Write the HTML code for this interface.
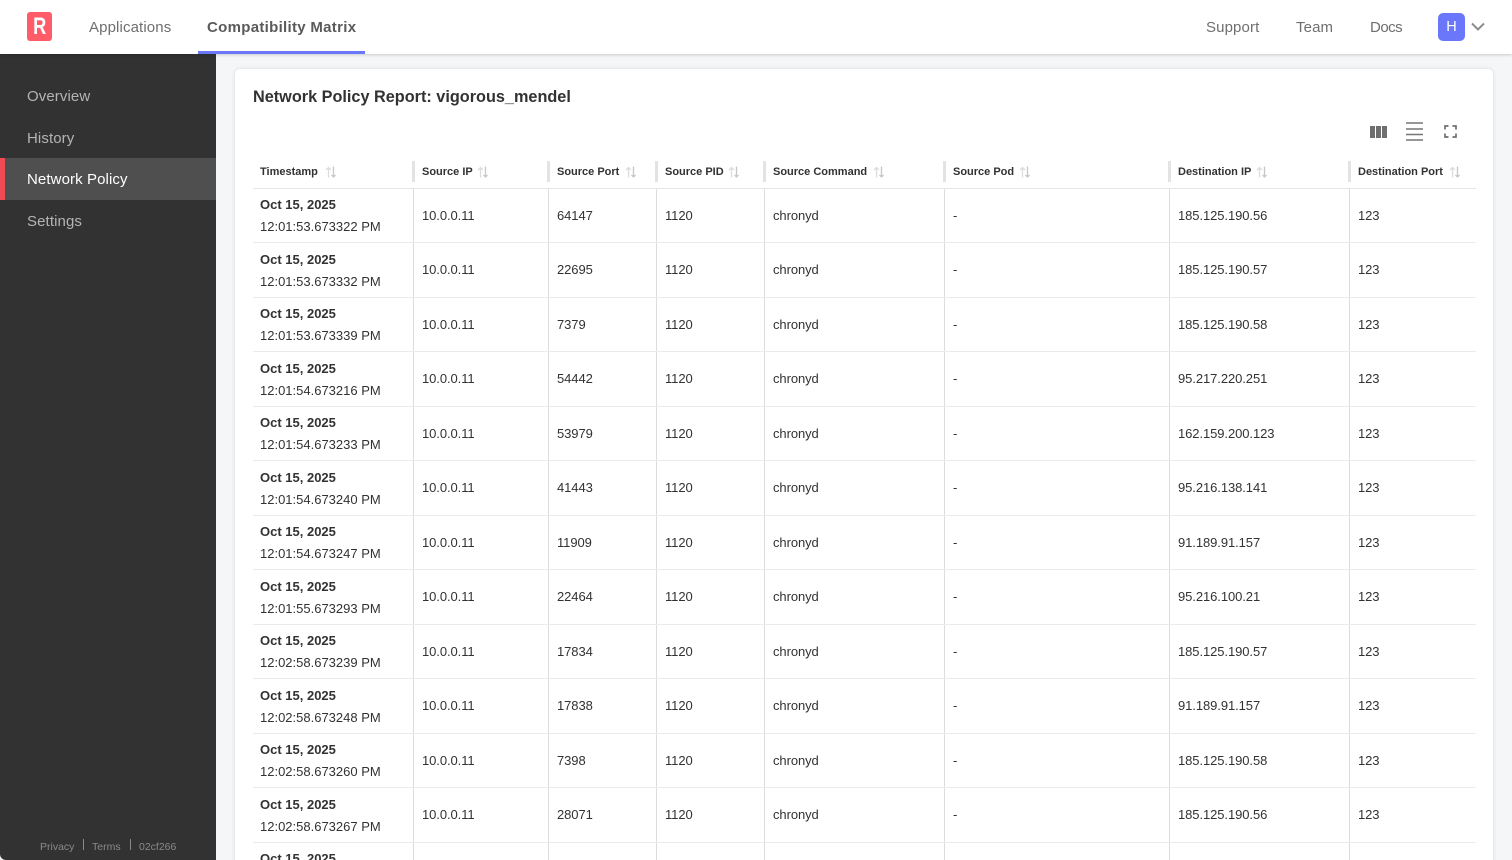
<!DOCTYPE html>
<html><head><meta charset="utf-8"><title>Network Policy</title>
<style>
*{box-sizing:border-box}
html,body{margin:0;padding:0;width:1512px;height:860px;overflow:hidden;background:#f5f6f8;font-family:"Liberation Sans",sans-serif;color:#323232}
#w{position:relative;width:1512px;height:860px;overflow:hidden;background:#f5f6f8}
.top{position:absolute;left:0;top:0;width:1512px;height:54px;background:#fff;box-shadow:0 1px 3px rgba(0,0,0,.18);z-index:5}
.logo{position:absolute;left:27px;top:12px;width:25px;height:29px;background:#ff5b69;border-radius:3px;color:#fff;font-weight:bold;font-size:24px;line-height:30px;text-align:center}
.logo span{display:inline-block;transform:scaleX(.76)}
.n{position:absolute;top:18px;font-size:15px;line-height:20px;color:#6f6f6f;white-space:nowrap;letter-spacing:.12px}
.tab{position:absolute;left:198px;top:51px;width:167px;height:3px;background:#6a77fb}
.av{position:absolute;left:1438px;top:13px;width:27px;height:28px;background:#6a77fb;border-radius:5px;color:#fff;font-size:14.500px;line-height:28px;text-align:center}
.side{position:absolute;left:0;top:54px;width:216px;height:806px;background:#323232;border-bottom-left-radius:6px}
.s{position:absolute;left:27px;font-size:15px;line-height:20px;color:#b4b4b4;letter-spacing:.1px;white-space:nowrap}
.act{position:absolute;left:0;top:104px;width:216px;height:42px;background:#4f4f4f;border-left:5px solid #f04b55}
.f{position:absolute;top:786px;font-size:10.500px;line-height:14px;color:#8a8a8a;white-space:nowrap}
.d{position:absolute;top:785px;width:1px;height:11px;background:#8a8a8a}
.card{position:absolute;left:235px;top:69px;width:1258px;height:830px;background:#fff;border-radius:5px;box-shadow:0 0 4px rgba(0,0,0,.12)}
h1{position:absolute;left:253px;top:86px;margin:0;font-size:16.250px;line-height:22px;font-weight:bold;color:#323232;white-space:nowrap}
.ic{position:absolute}
.tbl{position:absolute;left:253px;top:155px;width:1223px;height:705px;overflow:hidden}
.h,.r{display:flex}
.h{height:33.500px;border-bottom:1px solid #e6e6e6;font-size:11px;font-weight:bold;color:#323232;line-height:34px}
.h>div{position:relative;padding-left:8px;white-space:nowrap}
.h>div:first-child{padding-left:7px}
.h>div:not(:first-child)::before{content:"";position:absolute;left:-2px;top:6px;width:3px;height:21px;background:#e3e3e3}
.h svg{position:absolute;top:11px;margin-left:-1px}
.r{height:54.500px;border-bottom:1px solid #ebebeb;font-size:13px;color:#323232;line-height:54px}
.r>div{padding-left:8px;border-left:1px solid #dcdcdc;white-space:nowrap;letter-spacing:-.08px}
.r>div:first-child{border-left:0;padding-left:7px;line-height:22px;padding-top:5.500px;letter-spacing:0}
.r b{display:block;color:#323232}
.a{width:161px}.b{width:135px}.c{width:108px}.e{width:108px}.g{width:180px}.i{width:225px}.j{width:180px}.k{width:126px}
.r .a{width:160px}.r .k{width:127px}
</style></head><body>
<svg width="0" height="0" style="position:absolute"><symbol id="so" viewBox="0 0 12 12"><path d="M3.500 11.500V1.500M1 4l2.500-2.500L6 4" fill="none" stroke="#dcdcdc" stroke-width="1.300"/><path d="M8.500 .5v10.500M6.500 9l2 2 2-2" fill="none" stroke="#c8c8c8" stroke-width="1.300"/></symbol></svg>
<div id="w">
<div class="top">
<div class="logo"><span>R</span></div>
<div class="n" style="left:89px">Applications</div>
<div class="n" style="left:207px;font-weight:bold;color:#5a5a5a;letter-spacing:.3px">Compatibility Matrix</div>
<div class="tab"></div>
<div class="n" style="left:1206px">Support</div>
<div class="n" style="left:1296px">Team</div>
<div class="n" style="left:1370px;letter-spacing:-.5px">Docs</div>
<div class="av">H</div>
<svg class="ic" style="left:1470px;top:22px" width="16" height="10" viewBox="0 0 16 10"><path d="M2 1.500l6 6 6-6" fill="none" stroke="#8c8c8c" stroke-width="2"/></svg>
</div>
<div class="side">
<div class="act"></div>
<div class="s" style="top:33px">Overview</div>
<div class="s" style="top:75px">History</div>
<div class="s" style="top:116px;color:#fff">Network Policy</div>
<div class="s" style="top:158px">Settings</div>
<div class="f" style="left:40px">Privacy</div><div class="d" style="left:83px"></div>
<div class="f" style="left:92px">Terms</div><div class="d" style="left:130px"></div>
<div class="f" style="left:139px">02cf266</div>
</div>
<div class="card"></div>
<h1>Network Policy Report: vigorous_mendel</h1>
<svg class="ic" style="left:1370px;top:126px" width="17" height="12" viewBox="0 0 17 12"><path d="M0 0h5v12H0zM6 0h5v12H6zM12 0h5v12h-5z" fill="#6f6f6f"/></svg>
<svg class="ic" style="left:1406px;top:122px" width="17" height="19" viewBox="0 0 17 19"><path d="M0 1h17M0 7h17M0 12.500h17M0 18h17" stroke="#757575" stroke-width="1.500" fill="none"/></svg>
<svg class="ic" style="left:1444px;top:125px" width="13" height="13" viewBox="0 0 13 13"><path d="M1 4.500V1h3.500M8.500 1H12v3.500M12 8.500V12H8.500M4.500 12H1V8.500" stroke="#6f6f6f" stroke-width="1.700" fill="none"/></svg>
<div class="tbl">
<div class="h">
<div class="a">Timestamp<svg width="12" height="12" style="left:73px"><use href="#so"/></svg></div>
<div class="b">Source IP<svg width="12" height="12" style="left:64px"><use href="#so"/></svg></div>
<div class="c">Source Port<svg width="12" height="12" style="left:77px"><use href="#so"/></svg></div>
<div class="e">Source PID<svg width="12" height="12" style="left:72px"><use href="#so"/></svg></div>
<div class="g">Source Command<svg width="12" height="12" style="left:109px"><use href="#so"/></svg></div>
<div class="i">Source Pod<svg width="12" height="12" style="left:75px"><use href="#so"/></svg></div>
<div class="j">Destination IP<svg width="12" height="12" style="left:87px"><use href="#so"/></svg></div>
<div class="k">Destination Port<svg width="12" height="12" style="left:100px"><use href="#so"/></svg></div>
</div>
<div class="r"><div class="a"><b>Oct 15, 2025</b>12:01:53.673322 PM</div><div class="b">10.0.0.11</div><div class="c">64147</div><div class="e">1120</div><div class="g">chronyd</div><div class="i">-</div><div class="j">185.125.190.56</div><div class="k">123</div></div>
<div class="r"><div class="a"><b>Oct 15, 2025</b>12:01:53.673332 PM</div><div class="b">10.0.0.11</div><div class="c">22695</div><div class="e">1120</div><div class="g">chronyd</div><div class="i">-</div><div class="j">185.125.190.57</div><div class="k">123</div></div>
<div class="r"><div class="a"><b>Oct 15, 2025</b>12:01:53.673339 PM</div><div class="b">10.0.0.11</div><div class="c">7379</div><div class="e">1120</div><div class="g">chronyd</div><div class="i">-</div><div class="j">185.125.190.58</div><div class="k">123</div></div>
<div class="r"><div class="a"><b>Oct 15, 2025</b>12:01:54.673216 PM</div><div class="b">10.0.0.11</div><div class="c">54442</div><div class="e">1120</div><div class="g">chronyd</div><div class="i">-</div><div class="j">95.217.220.251</div><div class="k">123</div></div>
<div class="r"><div class="a"><b>Oct 15, 2025</b>12:01:54.673233 PM</div><div class="b">10.0.0.11</div><div class="c">53979</div><div class="e">1120</div><div class="g">chronyd</div><div class="i">-</div><div class="j">162.159.200.123</div><div class="k">123</div></div>
<div class="r"><div class="a"><b>Oct 15, 2025</b>12:01:54.673240 PM</div><div class="b">10.0.0.11</div><div class="c">41443</div><div class="e">1120</div><div class="g">chronyd</div><div class="i">-</div><div class="j">95.216.138.141</div><div class="k">123</div></div>
<div class="r"><div class="a"><b>Oct 15, 2025</b>12:01:54.673247 PM</div><div class="b">10.0.0.11</div><div class="c">11909</div><div class="e">1120</div><div class="g">chronyd</div><div class="i">-</div><div class="j">91.189.91.157</div><div class="k">123</div></div>
<div class="r"><div class="a"><b>Oct 15, 2025</b>12:01:55.673293 PM</div><div class="b">10.0.0.11</div><div class="c">22464</div><div class="e">1120</div><div class="g">chronyd</div><div class="i">-</div><div class="j">95.216.100.21</div><div class="k">123</div></div>
<div class="r"><div class="a"><b>Oct 15, 2025</b>12:02:58.673239 PM</div><div class="b">10.0.0.11</div><div class="c">17834</div><div class="e">1120</div><div class="g">chronyd</div><div class="i">-</div><div class="j">185.125.190.57</div><div class="k">123</div></div>
<div class="r"><div class="a"><b>Oct 15, 2025</b>12:02:58.673248 PM</div><div class="b">10.0.0.11</div><div class="c">17838</div><div class="e">1120</div><div class="g">chronyd</div><div class="i">-</div><div class="j">91.189.91.157</div><div class="k">123</div></div>
<div class="r"><div class="a"><b>Oct 15, 2025</b>12:02:58.673260 PM</div><div class="b">10.0.0.11</div><div class="c">7398</div><div class="e">1120</div><div class="g">chronyd</div><div class="i">-</div><div class="j">185.125.190.58</div><div class="k">123</div></div>
<div class="r"><div class="a"><b>Oct 15, 2025</b>12:02:58.673267 PM</div><div class="b">10.0.0.11</div><div class="c">28071</div><div class="e">1120</div><div class="g">chronyd</div><div class="i">-</div><div class="j">185.125.190.56</div><div class="k">123</div></div>
<div class="r"><div class="a"><b>Oct 15, 2025</b></div><div class="b"></div><div class="c"></div><div class="e"></div><div class="g"></div><div class="i"></div><div class="j"></div><div class="k"></div></div>
</div>
</div>
</body></html>
